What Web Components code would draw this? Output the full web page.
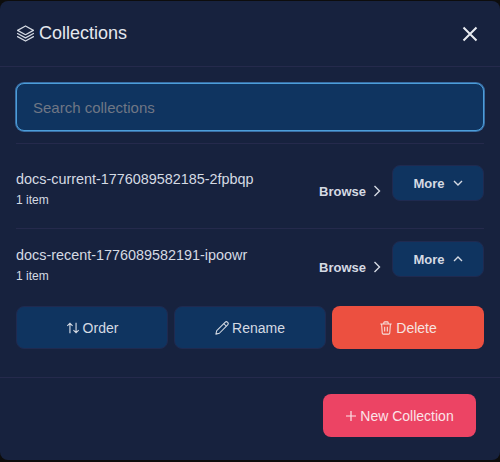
<!DOCTYPE html>
<html><head><meta charset="utf-8">
<style>
html,body{margin:0;padding:0;background:#0d0d0d;height:462px;overflow:hidden;font-family:"Liberation Sans",Arial,sans-serif;}
</style></head><body>
<template id="t-btn"><style>
:host{display:flex;align-items:center;justify-content:center;box-sizing:border-box;border-radius:8px;font-size:14px;color:#d5dae3;background:#0f3460;border:1px solid #1f2a50;gap:var(--gap,3px);cursor:pointer;}
:host([variant=danger]){background:#ec5040;border:0;color:#f6e3e0;}
:host([variant=primary]){background:#ec4464;border:0;color:#fbe3e8;}
:host([variant=small]){font-size:13px;font-weight:700;}
::slotted(svg){display:block;flex:none;}
</style><slot></slot></template>
<template id="t-row"><style>
:host{display:flex;box-sizing:border-box;justify-content:space-between;border-top:1px solid #252a4c;padding:21px 0 0;height:85px;}
.info{padding-top:5px;color:#d5dae3;}
.name{font-size:14.4px;line-height:18px;}
.count{font-size:12px;line-height:14px;margin-top:5px;}
.acts{display:flex;align-items:flex-start;}
.browse{display:flex;align-items:center;gap:7px;font-size:13px;font-weight:700;color:#d5dae3;margin:12px 11px 0 0;height:28px;}
</style><div class="info"><div class="name"><slot name="name"></slot></div><div class="count"><slot name="count"></slot></div></div>
<div class="acts"><div class="browse"><slot name="browse"></slot></div><slot name="more"></slot></div></template>
<template id="t-modal"><style>
:host{display:flex;flex-direction:column;box-sizing:border-box;height:459px;margin-top:1px;background:#17223e;border-radius:8px;color:#d5dae3;}
header{display:flex;align-items:center;justify-content:space-between;box-sizing:border-box;height:66px;border-bottom:1px solid #252a4c;padding:0 22px 0 16px;}
.body{padding:16px 16px 0;flex:1;}
footer{display:flex;justify-content:flex-end;box-sizing:border-box;height:83px;border-top:1px solid #252a4c;padding:16px 24px 0;}
</style><header><slot name="head"></slot></header><div class="body"><slot></slot></div><footer><slot name="foot"></slot></footer></template>
<template id="t-search"><style>
:host{display:block;box-sizing:border-box;height:48px;border:1px solid #4c9ed9;border-radius:8px;background:#0f3460;box-shadow:0 0 0 1px #3a6ea5;margin-bottom:12px;}
input{display:block;box-sizing:border-box;width:100%;height:100%;background:transparent;border:0;outline:0;padding:0 16px;font:15px "Liberation Sans",Arial,sans-serif;color:#d5dae3;}
input::placeholder{color:#6f7785;opacity:1;}
</style><input placeholder="Search collections"></template>
<template id="t-title"><style>
:host{display:flex;align-items:center;gap:4px;font-size:18px;color:#e4e8ee;}
</style><slot></slot></template>

<c-modal>
 <c-title slot="head"><svg width="19" height="19" viewBox="0 0 24 24" fill="none" stroke="#d5dae3" stroke-width="1.6" stroke-linejoin="round" stroke-linecap="round"><path d="M12 2.5 22 8l-10 5.5L2 8z"/><path d="M2 12l10 5.5L22 12"/><path d="M2 16l10 5.5L22 16"/></svg>Collections</c-title>
 <svg slot="head" width="16" height="16" viewBox="0 0 16 16" fill="none" stroke="#e8ebf0" stroke-width="2"><path d="M1.5 1.5l13 13M14.5 1.5l-13 13"/></svg>
 <c-search></c-search>
 <c-row>
  <span slot="name">docs-current-1776089582185-2fpbqp</span><span slot="count">1 item</span>
  <span slot="browse">Browse</span><svg slot="browse" width="8" height="12" viewBox="0 0 8 12" fill="none" stroke="#d5dae3" stroke-width="1.4"><path d="M1.5 1l5 5-5 5"/></svg>
  <c-btn slot="more" variant="small" style="width:92px;height:36px;--gap:8px;">More<svg width="10" height="6" viewBox="0 0 10 6" fill="none" stroke="#d5dae3" stroke-width="1.4"><path d="M1 1l4 4 4-4"/></svg></c-btn>
 </c-row>
 <c-row style="height:78px;padding-top:12px;">
  <span slot="name">docs-recent-1776089582191-ipoowr</span><span slot="count">1 item</span>
  <span slot="browse">Browse</span><svg slot="browse" width="8" height="12" viewBox="0 0 8 12" fill="none" stroke="#d5dae3" stroke-width="1.4"><path d="M1.5 1l5 5-5 5"/></svg>
  <c-btn slot="more" variant="small" style="width:92px;height:36px;--gap:8px;">More<svg width="10" height="6" viewBox="0 0 10 6" fill="none" stroke="#d5dae3" stroke-width="1.4"><path d="M1 5l4-4 4 4"/></svg></c-btn>
 </c-row>
 <c-actions>
  <c-btn><svg width="14" height="14" viewBox="0 0 16 16" fill="none" stroke="#d5dae3" stroke-width="1.3"><path d="M4.5 14V2.5M1.5 5.5l3-3 3 3M11.5 2v11.5M8.5 10.5l3 3 3-3"/></svg>Order</c-btn>
  <c-btn><svg width="14" height="14" viewBox="0 0 16 16" fill="none" stroke="#d5dae3" stroke-width="1.2" stroke-linejoin="round"><path d="M11.5 1.5a1.9 1.9 0 0 1 3 2.9L5 14l-4 1 1-4z"/><path d="M10 3l3 3"/></svg>Rename</c-btn>
  <c-btn variant="danger"><svg width="14" height="14" viewBox="0 0 16 16" fill="none" stroke="#f6e3e0" stroke-width="1.2"><path d="M1.5 3.5h13M5.5 3.5V2a1 1 0 0 1 1-1h3a1 1 0 0 1 1 1v1.5M3 3.5l.7 10.5a1.2 1.2 0 0 0 1.2 1h6.2a1.2 1.2 0 0 0 1.2-1L13 3.5M6.5 6.5v5.5M9.5 6.5v5.5"/></svg>Delete</c-btn>
 </c-actions>
 <c-btn slot="foot" variant="primary" style="width:153px;height:43px;"><svg width="12" height="12" viewBox="0 0 12 12" fill="none" stroke="#fbe3e8" stroke-width="1.2"><path d="M6 1v10M1 6h10"/></svg>New Collection</c-btn>
</c-modal>
<script>
function def(name,tid){customElements.define(name,class extends HTMLElement{constructor(){super();this.attachShadow({mode:'open'}).appendChild(document.getElementById(tid).content.cloneNode(true));}});}
def('c-btn','t-btn');def('c-row','t-row');def('c-modal','t-modal');def('c-search','t-search');def('c-title','t-title');
customElements.define('c-actions',class extends HTMLElement{constructor(){super();this.attachShadow({mode:'open'}).innerHTML='<style>:host{display:grid;grid-template-columns:repeat(3,1fr);gap:6px;grid-auto-rows:43px}</style><slot></slot>';}});
</script>
</body></html>
